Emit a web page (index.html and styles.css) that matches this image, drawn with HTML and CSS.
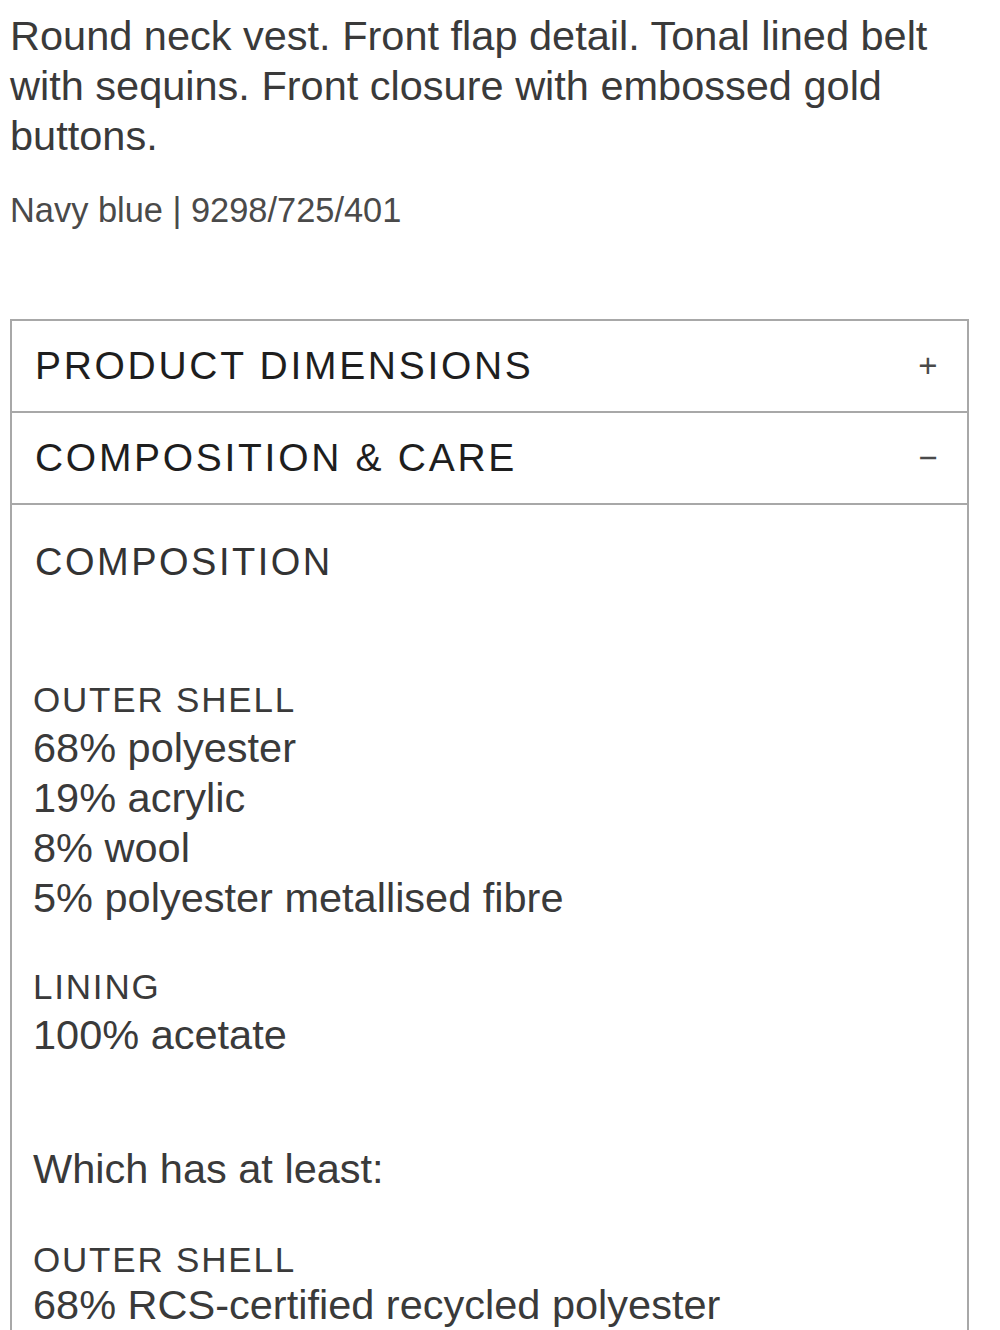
FILE: index.html
```html
<!DOCTYPE html>
<html>
<head>
<meta charset="utf-8">
<link rel="stylesheet" href="styles.css">
</head>
<body>
<div class="page">
  <p class="desc">Round neck vest. Front flap detail. Tonal lined belt with sequins. Front closure with embossed gold buttons.</p>
  <p class="ref">Navy blue | 9298/725/401</p>
  <div class="accordion">
    <div class="acc-head">
      <span class="acc-title">PRODUCT DIMENSIONS</span>
      <span class="acc-icon">+</span>
    </div>
    <div class="acc-head">
      <span class="acc-title">COMPOSITION &amp; CARE</span>
      <span class="acc-icon">&minus;</span>
    </div>
    <div class="acc-body">
      <div class="comp-title">COMPOSITION</div>
      <div class="group g1">
        <div class="label">OUTER SHELL</div>
        <div class="item">68% polyester</div>
        <div class="item">19% acrylic</div>
        <div class="item">8% wool</div>
        <div class="item">5% polyester metallised fibre</div>
      </div>
      <div class="group g2">
        <div class="label">LINING</div>
        <div class="item">100% acetate</div>
      </div>
      <div class="note">Which has at least:</div>
      <div class="group g3">
        <div class="label">OUTER SHELL</div>
        <div class="item last">68% RCS-certified recycled polyester</div>
      </div>
    </div>
  </div>
</div>
</body>
</html>
```
FILE: styles.css
```css
html, body {
  margin: 0;
  padding: 0;
  background: #fff;
}
body {
  font-family: "Liberation Sans", Arial, sans-serif;
  color: #3a3a3a;
  overflow: hidden;
  height: 1330px;
}
.page {
  padding: 11px 0 0 10px;
  height: 1319px;
  overflow: hidden;
}
.desc {
  margin: 0;
  font-size: 41.5px;
  line-height: 50px;
  width: 945px;
  color: #3a3a3a;
}
.ref {
  margin: 29px 0 0 0;
  font-size: 34.4px;
  line-height: 40px;
  color: #4a4a4a;
}
.accordion {
  margin-top: 89px;
  width: 955px;
  border: 2px solid #a8a8a8;
  border-bottom: none;
}
.acc-head {
  height: 90px;
  border-bottom: 2px solid #a8a8a8;
  display: flex;
  align-items: center;
  justify-content: space-between;
  padding: 0 28px 0 23px;
}
.acc-title {
  font-size: 39px;
  letter-spacing: 2.7px;
  color: #1e1e1e;
}
.acc-icon {
  font-size: 33px;
  color: #4a4a4a;
  width: 22px;
  text-align: center;
}
.acc-body {
  padding: 32px 0 0 21px;
  height: 794px;
  box-sizing: content-box;
}
.comp-title {
  font-size: 38px;
  letter-spacing: 2.5px;
  line-height: 50px;
  color: #333;
  padding-left: 2px;
}
.label {
  font-size: 35px;
  line-height: 46px;
  letter-spacing: 1.8px;
  color: #3a3a3a;
}
.item {
  font-size: 41.5px;
  line-height: 50px;
  color: #3a3a3a;
}
.item.last {
  line-height: 44px;
}
.g1 { margin-top: 90px; }
.g2 { margin-top: 41px; }
.note {
  margin-top: 84px;
  font-size: 41.5px;
  line-height: 50px;
}
.g3 { margin-top: 43px; }
```
